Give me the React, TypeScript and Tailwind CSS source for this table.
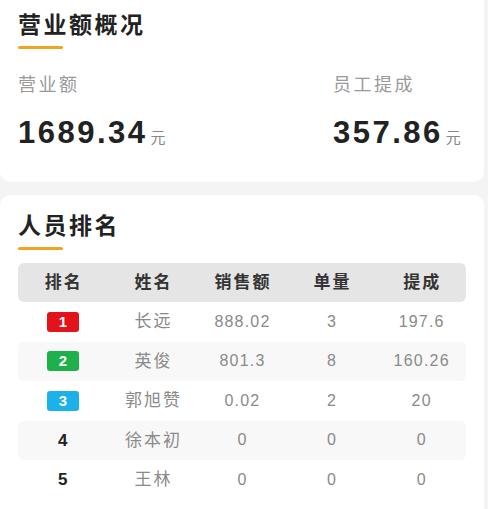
const ranks = [
  { rank: 1, name: '长远', sales: '888.02', count: '3', bonus: '197.6' },
  { rank: 2, name: '英俊', sales: '801.3', count: '8', bonus: '160.26' },
  { rank: 3, name: '郭旭赞', sales: '0.02', count: '2', bonus: '20' },
  { rank: 4, name: '徐本初', sales: '0', count: '0', bonus: '0' },
  { rank: 5, name: '王林', sales: '0', count: '0', bonus: '0' },
]

const badgeColors: Record<number, string> = {
  1: 'bg-[#e3131c]',
  2: 'bg-[#1eb14b]',
  3: 'bg-[#1db1ea]',
}

function Title({ children }: { children: string }) {
  return (
    <div>
      <div className="text-[23px] font-bold leading-[28px] tracking-[2.5px] text-[#222]">{children}</div>
      <div className="mt-[7px] h-[3px] w-[45px] rounded-full bg-[#f0a51e]" />
    </div>
  )
}

function Stat({ label, value }: { label: string; value: string }) {
  return (
    <div className="flex-1">
      <div className="text-[18px] leading-[24px] tracking-[2.5px] text-[#9a9a9a]">{label}</div>
      <div className="mt-[18px] flex items-baseline">
        <span className="text-[31px] font-bold leading-[36px] tracking-[2.5px] text-[#222]">{value}</span>
        <span className="ml-[3px] text-[15px] text-[#888]">元</span>
      </div>
    </div>
  )
}

export default function App() {
  return (
    <div
      className="h-[509px] w-[488px] overflow-hidden bg-[#f4f4f4] pr-[4px]"
      style={{ fontFamily: '"Liberation Sans", "Noto Sans CJK SC", sans-serif' }}
    >
      <div className="h-[182px] rounded-b-[10px] bg-white px-[18px] pt-[11px]">
        <Title>营业额概况</Title>
        <div className="mt-[24px] flex">
          <Stat label="营业额" value="1689.34" />
          <div className="w-[133px]">
            <Stat label="员工提成" value="357.86" />
          </div>
        </div>
      </div>

      <div className="mt-[13px] h-[400px] rounded-[10px] bg-white px-[18px] pt-[17px]">
        <Title>人员排名</Title>
        <div className="mt-[13px] w-[448px]">
          <div className="grid h-[39px] grid-cols-5 items-center rounded-[6px] bg-[#e5e5e5] text-center text-[17px] font-bold tracking-[2px] text-[#333]">
            <div className="pl-[2px]">排名</div>
            <div className="pl-[2px]">姓名</div>
            <div className="pl-[2px]">销售额</div>
            <div className="pl-[2px]">单量</div>
            <div className="pl-[2px]">提成</div>
          </div>
          {ranks.map((r, i) => (
            <div
              key={r.rank}
              className={
                'grid h-[39.5px] grid-cols-5 items-center rounded-[6px] text-center text-[16px] text-[#8a8a8a] ' +
                (i % 2 === 1 ? 'bg-[#f8f8f8]' : 'bg-white')
              }
            >
              <div className="flex justify-center">
                {r.rank <= 3 ? (
                  <span
                    className={
                      'flex h-[20px] w-[32px] items-center justify-center rounded-[3px] text-[15px] font-bold text-white ' +
                      badgeColors[r.rank]
                    }
                  >
                    {r.rank}
                  </span>
                ) : (
                  <span className="text-[17px] font-bold text-[#222]">{r.rank}</span>
                )}
              </div>
              <div className="pl-[2px] text-[17px] tracking-[2px]">{r.name}</div>
              <div className="pl-[1px] tracking-[1.2px]">{r.sales}</div>
              <div className="pl-[1px] tracking-[1.2px]">{r.count}</div>
              <div className="pl-[1px] tracking-[1.2px]">{r.bonus}</div>
            </div>
          ))}
        </div>
      </div>
    </div>
  )
}
